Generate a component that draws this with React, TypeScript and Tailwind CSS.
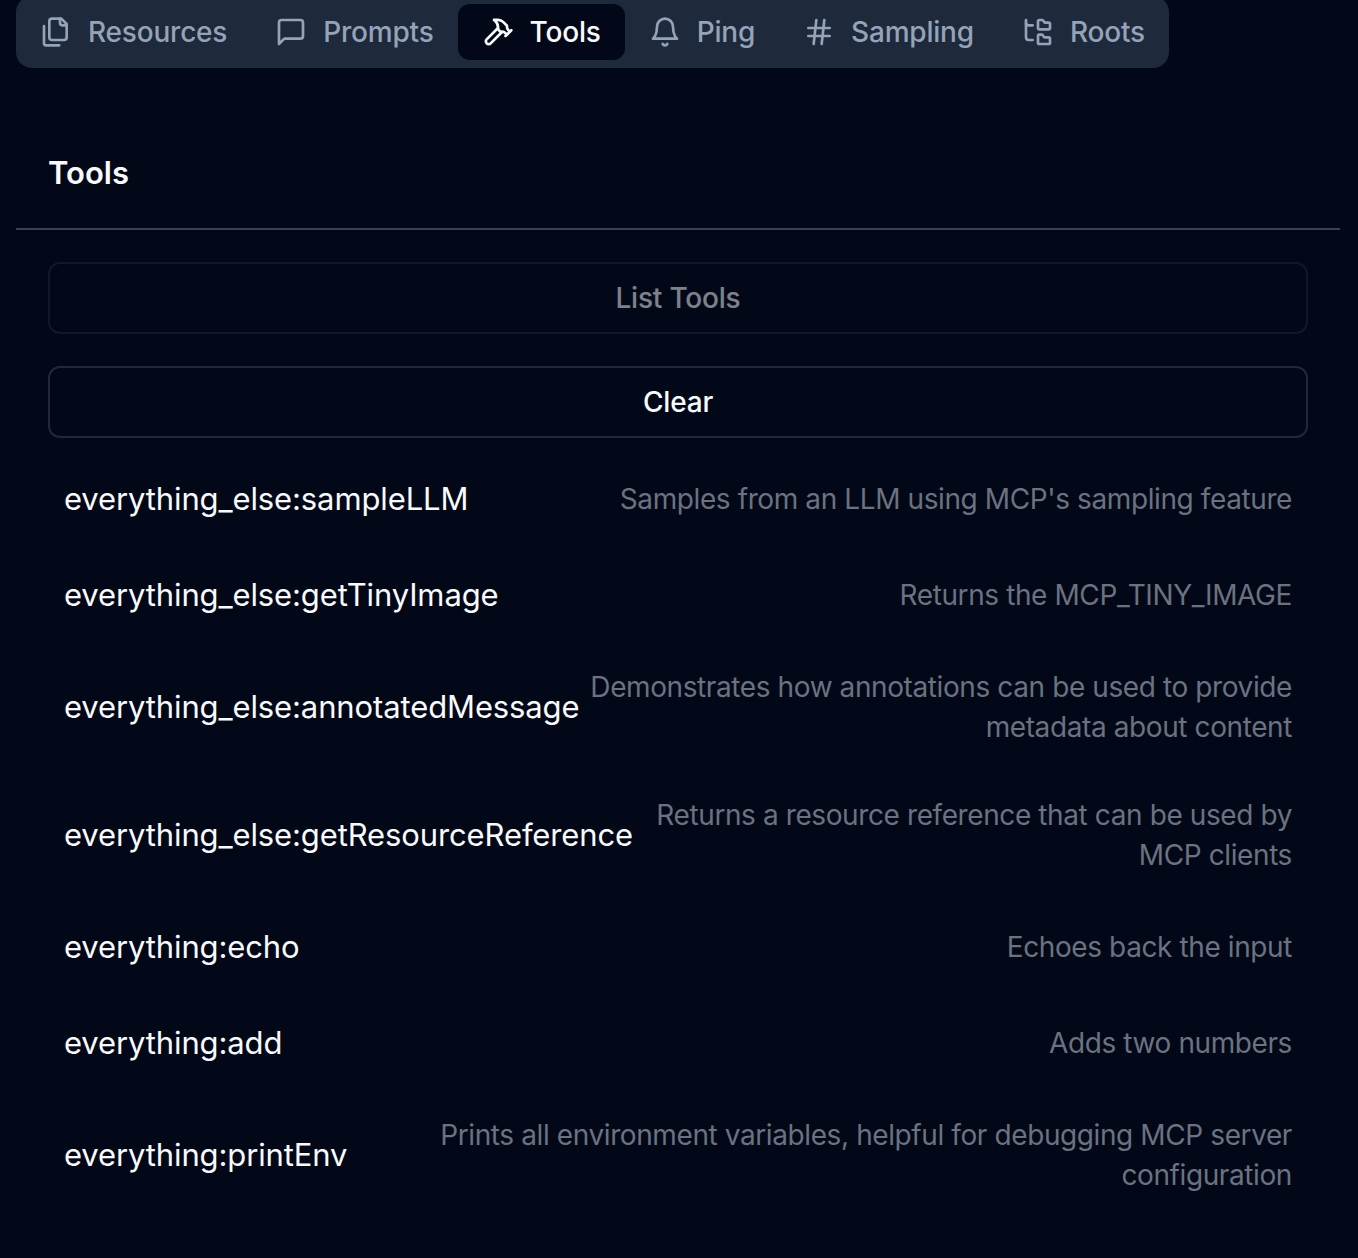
import type { ReactNode } from "react";
import { FolderTree, Hash } from "lucide-react";

// older lucide outlines, the installed package has redrawn these
function Glyph({ children }: { children: ReactNode }) {
  return (
    <svg
      viewBox="0 0 24 24"
      fill="none"
      stroke="currentColor"
      strokeWidth={2}
      strokeLinecap="round"
      strokeLinejoin="round"
      className="h-8 w-8"
    >
      {children}
    </svg>
  );
}

const tabs = [
  {
    label: "Resources",
    icon: (
      <Glyph>
        <path d="M20 7h-3a2 2 0 0 1-2-2V2" />
        <path d="M9 18a2 2 0 0 1-2-2V4a2 2 0 0 1 2-2h7l4 4v10a2 2 0 0 1-2 2Z" />
        <path d="M3 7.6v12.8A1.6 1.6 0 0 0 4.6 22h9.8" />
      </Glyph>
    ),
  },
  {
    label: "Prompts",
    icon: (
      <Glyph>
        <path d="M21 15a2 2 0 0 1-2 2H7l-4 4V5a2 2 0 0 1 2-2h14a2 2 0 0 1 2 2z" />
      </Glyph>
    ),
  },
  {
    label: "Tools",
    active: true,
    icon: (
      <Glyph>
        <path d="m15 12-8.5 8.5c-.83.83-2.17.83-3 0 0 0 0 0 0 0a2.12 2.12 0 0 1 0-3L12 9" />
        <path d="M17.64 15 22 10.64" />
        <path d="m20.91 11.7-1.25-1.25c-.6-.6-.93-1.4-.93-2.25v-.86L16.01 4.6a5.56 5.56 0 0 0-3.94-1.64H9l.92.82A6.18 6.18 0 0 1 12 8.4v1.56l2 2h2.47l2.26 1.91" />
      </Glyph>
    ),
  },
  {
    label: "Ping",
    icon: (
      <Glyph>
        <path d="M6 8a6 6 0 0 1 12 0c0 7 3 9 3 9H3s3-2 3-9" />
        <path d="M10.3 21a1.94 1.94 0 0 0 3.4 0" />
      </Glyph>
    ),
  },
  { label: "Sampling", icon: <Hash className="h-8 w-8" /> },
  { label: "Roots", icon: <FolderTree className="h-8 w-8" /> },
];

const tools = [
  { name: "everything_else:sampleLLM", description: "Samples from an LLM using MCP's sampling feature" },
  { name: "everything_else:getTinyImage", description: "Returns the MCP_TINY_IMAGE" },
  { name: "everything_else:annotatedMessage", description: "Demonstrates how annotations can be used to provide metadata about content" },
  { name: "everything_else:getResourceReference", description: "Returns a resource reference that can be used by MCP clients" },
  { name: "everything:echo", description: "Echoes back the input" },
  { name: "everything:add", description: "Adds two numbers" },
  { name: "everything:printEnv", description: "Prints all environment variables, helpful for debugging MCP server configuration" },
];

export default function App() {
  return (
    <div className="h-[1258px] overflow-hidden bg-[#020817] pr-[18px] pl-4 font-['Inter',sans-serif] text-[#f8fafc]">
      {/* Tabs */}
      <div className="-mt-1 inline-flex h-[72px] items-center rounded-2xl bg-[#1e293b]">
        {tabs.map((tab) => (
          <button
            key={tab.label}
            className={
              tab.active
                ? "flex h-14 items-center gap-4 rounded-xl bg-[#020817] px-6 text-[28px] font-medium tracking-[-0.2px] text-[#f8fafc]"
                : "flex h-14 items-center gap-4 rounded-xl px-6 text-[28px] font-medium tracking-[-0.2px] text-[#94a3b8]"
            }
          >
            {tab.icon}
            {tab.label}
          </button>
        ))}
      </div>

      {/* Title */}
      <div className="mt-[81px] border-b-2 border-[#374151] px-8 pb-[31px]">
        <h3 className="text-[31px] leading-[48px] font-semibold">Tools</h3>
      </div>

      {/* Actions */}
      <div className="px-8 pt-8">
        <button className="h-[72px] w-full rounded-xl border-2 border-[#1e293b] text-[28px] font-medium tracking-[-0.2px] opacity-50">
          List Tools
        </button>
        <button className="mt-8 h-[72px] w-full rounded-xl border-2 border-[#1e293b] text-[28px] font-medium tracking-[-0.2px]">
          Clear
        </button>

        {/* Tool list */}
        <div className="mt-[21px] flex flex-col gap-4">
          {tools.map((tool) => (
            <div key={tool.name} className="flex items-center p-4">
              <span className="mr-2 shrink-0 text-[31px] leading-[48px] tracking-[-0.12px]">{tool.name}</span>
              <span className="ml-auto max-w-[1024px] text-right text-[28px] leading-10 tracking-[-0.4px] text-[#6b7280]">
                {tool.description}
              </span>
            </div>
          ))}
        </div>
      </div>
    </div>
  );
}
